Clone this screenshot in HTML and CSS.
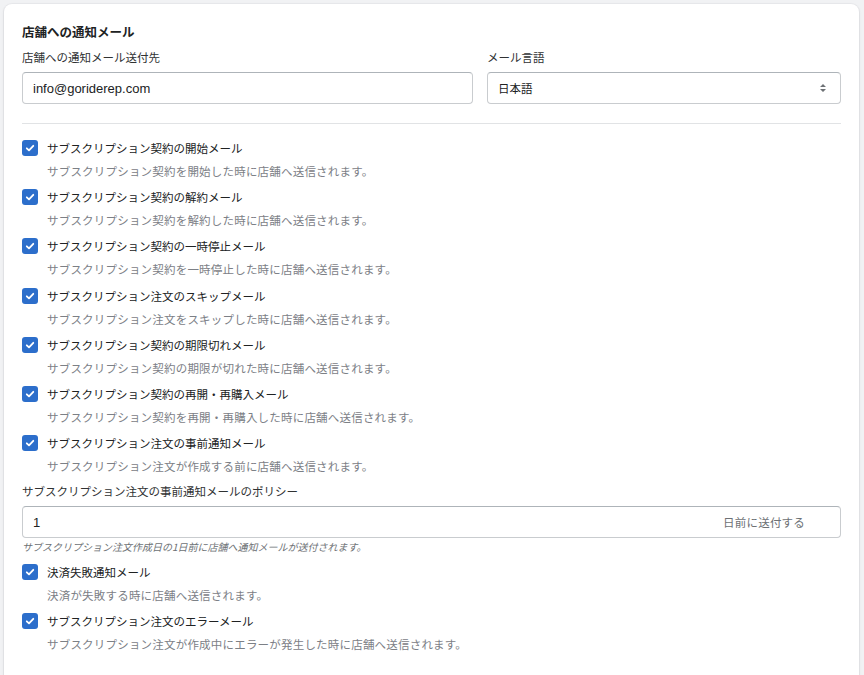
FILE: index.html
```html
<!DOCTYPE html>
<html lang="ja">
<head>
<meta charset="utf-8">
<link rel="stylesheet" href="styles.css">
</head>
<body>
<div class="card">
  <h2 class="title">店舗への通知メール</h2>
  <div class="fields">
    <div class="field">
      <label class="label">店舗への通知メール送付先</label>
      <div class="input"><span class="value">info@goriderep.com</span></div>
    </div>
    <div class="field">
      <label class="label">メール言語</label>
      <div class="input select"><span class="jp-value">日本語</span>
        <svg class="arrows" width="8" height="10" viewBox="0 0 8 10"><path d="M4 1 L7 4 H1 Z M4 9 L7 6 H1 Z" fill="#6d7175"/></svg>
      </div>
    </div>
  </div>
  <div class="divider"></div>
  <div class="list">
    <div class="row"><span class="cb"><svg width="16" height="16" viewBox="0 0 16 16"><path d="M4.8 8.3 L7 10.4 L11.3 5.8" fill="none" stroke="#fff" stroke-width="1.8" stroke-linecap="round" stroke-linejoin="round"/></svg></span><div class="texts"><div class="cb-label">サブスクリプション契約の開始メール</div><div class="desc">サブスクリプション契約を開始した時に店舗へ送信されます。</div></div></div>
    <div class="row"><span class="cb"><svg width="16" height="16" viewBox="0 0 16 16"><path d="M4.8 8.3 L7 10.4 L11.3 5.8" fill="none" stroke="#fff" stroke-width="1.8" stroke-linecap="round" stroke-linejoin="round"/></svg></span><div class="texts"><div class="cb-label">サブスクリプション契約の解約メール</div><div class="desc">サブスクリプション契約を解約した時に店舗へ送信されます。</div></div></div>
    <div class="row"><span class="cb"><svg width="16" height="16" viewBox="0 0 16 16"><path d="M4.8 8.3 L7 10.4 L11.3 5.8" fill="none" stroke="#fff" stroke-width="1.8" stroke-linecap="round" stroke-linejoin="round"/></svg></span><div class="texts"><div class="cb-label">サブスクリプション契約の一時停止メール</div><div class="desc">サブスクリプション契約を一時停止した時に店舗へ送信されます。</div></div></div>
    <div class="row"><span class="cb"><svg width="16" height="16" viewBox="0 0 16 16"><path d="M4.8 8.3 L7 10.4 L11.3 5.8" fill="none" stroke="#fff" stroke-width="1.8" stroke-linecap="round" stroke-linejoin="round"/></svg></span><div class="texts"><div class="cb-label">サブスクリプション注文のスキップメール</div><div class="desc">サブスクリプション注文をスキップした時に店舗へ送信されます。</div></div></div>
    <div class="row"><span class="cb"><svg width="16" height="16" viewBox="0 0 16 16"><path d="M4.8 8.3 L7 10.4 L11.3 5.8" fill="none" stroke="#fff" stroke-width="1.8" stroke-linecap="round" stroke-linejoin="round"/></svg></span><div class="texts"><div class="cb-label">サブスクリプション契約の期限切れメール</div><div class="desc">サブスクリプション契約の期限が切れた時に店舗へ送信されます。</div></div></div>
    <div class="row"><span class="cb"><svg width="16" height="16" viewBox="0 0 16 16"><path d="M4.8 8.3 L7 10.4 L11.3 5.8" fill="none" stroke="#fff" stroke-width="1.8" stroke-linecap="round" stroke-linejoin="round"/></svg></span><div class="texts"><div class="cb-label">サブスクリプション契約の再開・再購入メール</div><div class="desc">サブスクリプション契約を再開・再購入した時に店舗へ送信されます。</div></div></div>
    <div class="row"><span class="cb"><svg width="16" height="16" viewBox="0 0 16 16"><path d="M4.8 8.3 L7 10.4 L11.3 5.8" fill="none" stroke="#fff" stroke-width="1.8" stroke-linecap="round" stroke-linejoin="round"/></svg></span><div class="texts"><div class="cb-label">サブスクリプション注文の事前通知メール</div><div class="desc">サブスクリプション注文が作成する前に店舗へ送信されます。</div></div></div>
  </div>
  <div class="policy">
    <label class="label">サブスクリプション注文の事前通知メールのポリシー</label>
    <div class="input policy-input"><span class="value">1</span><span class="suffix">日前に送付する</span></div>
    <div class="hint">サブスクリプション注文作成日の1日前に店舗へ通知メールが送付されます。</div>
  </div>
  <div class="list list2">
    <div class="row"><span class="cb"><svg width="16" height="16" viewBox="0 0 16 16"><path d="M4.8 8.3 L7 10.4 L11.3 5.8" fill="none" stroke="#fff" stroke-width="1.8" stroke-linecap="round" stroke-linejoin="round"/></svg></span><div class="texts"><div class="cb-label">決済失敗通知メール</div><div class="desc">決済が失敗する時に店舗へ送信されます。</div></div></div>
    <div class="row"><span class="cb"><svg width="16" height="16" viewBox="0 0 16 16"><path d="M4.8 8.3 L7 10.4 L11.3 5.8" fill="none" stroke="#fff" stroke-width="1.8" stroke-linecap="round" stroke-linejoin="round"/></svg></span><div class="texts"><div class="cb-label">サブスクリプション注文のエラーメール</div><div class="desc">サブスクリプション注文が作成中にエラーが発生した時に店舗へ送信されます。</div></div></div>
  </div>
</div>
</body>
</html>
```
FILE: styles.css
```css
html, body {
  margin: 0;
  padding: 0;
  background: #f1f2f4;
  height: 100%;
  overflow: hidden;
}
body {
  font-family: "Noto Sans CJK JP", "Liberation Sans", sans-serif;
  font-size: 11.5px;
  color: #202223;
}
.card {
  margin: 4px 0 0 4px;
  width: 855px;
  height: 700px;
  box-sizing: border-box;
  background: #fff;
  border-radius: 8px;
  box-shadow: 0 0 0 1px rgba(63,63,68,0.04), 0 1px 3px rgba(63,63,68,0.12);
  padding: 20px 18px 0 18px;
}
.title {
  margin: 0;
  font-size: 12.5px;
  line-height: 16px;
  font-weight: 700;
}
.fields {
  display: grid;
  grid-template-columns: 451px 354px;
  gap: 14px;
  margin-top: 9px;
}
.field { display: flex; flex-direction: column; }
.label {
  display: block;
  line-height: 16px;
  margin-bottom: 7px;
  color: #303233;
}
.input {
  height: 32px;
  box-sizing: border-box;
  border: 1px solid #c9cccf;
  border-top-color: #aeb4b9;
  border-radius: 4px;
  display: flex;
  align-items: center;
  padding: 0 10px;
  background: #fff;
}
.value {
  font-family: "Liberation Sans", Arial, sans-serif;
  font-size: 13px;
  color: #202223;
}
.jp-value { font-size: 11.5px; }
.select { justify-content: space-between; padding-right: 13px; }
.arrows { display: block; }
.divider {
  height: 1px;
  background: #e1e3e5;
  margin: 19px 0 16px;
}
.list { display: flex; flex-direction: column; gap: 10.2px; }
.row { display: flex; align-items: flex-start; gap: 9px; }
.cb {
  width: 16px;
  height: 16px;
  flex: none;
  background: #2c6ecb;
  border-radius: 3px;
  display: block;
}
.cb svg { display: block; }
.cb-label { line-height: 16px; }
.desc {
  line-height: 16px;
  margin-top: 7px;
  color: #7c8086;
  letter-spacing: 0.2px;
}
.policy { margin-top: 9px; }
.policy-input { justify-content: space-between; padding-right: 35px; }
.suffix { color: #6d7175; letter-spacing: 0.2px; }
.hint {
  margin-top: 2px;
  font-size: 10px;
  line-height: 14px;
  font-style: italic;
  color: #6d7175;
}
.list2 { margin-top: 10px; }
.list2 { gap: 10px; }
```
